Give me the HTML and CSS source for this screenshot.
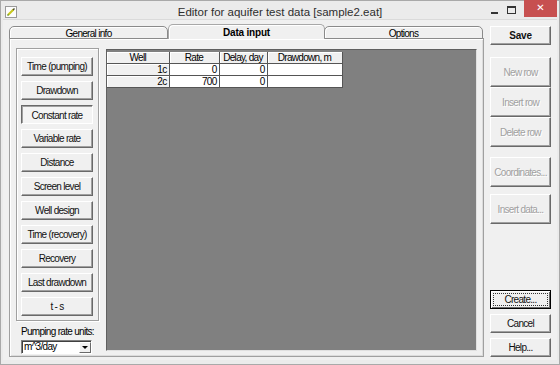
FILE: index.html
```html
<!DOCTYPE html>
<html lang="en">
<head>
    <meta charset="UTF-8">
    <title>Editor for aquifer test data [sample2.eat]</title>
    <link rel="stylesheet" href="styles.css">
</head>
<body>
<div class="window">
    <div class="titlebar">
        <svg class="app-icon" width="12" height="12" viewBox="0 0 12 12">
            <rect x="0.5" y="0.5" width="11" height="11" fill="#fdfdfd" stroke="#9a9a9a"/>
            <path d="M3 9 L8.5 3.5" stroke="#c8c820" stroke-width="2.2"/>
            <path d="M8 4 L9.5 2.5" stroke="#4a4a2a" stroke-width="1.5"/>
            <path d="M2.5 9.5 L3.5 8.5" stroke="#5a8a2a" stroke-width="1.2"/>
        </svg>
        <div class="title">Editor for aquifer test data [sample2.eat]</div>
        <div class="caption">
            <span class="cap-min"></span>
            <span class="cap-max"></span>
            <span class="cap-close">&#x2715;</span>
        </div>
    </div>

    <div class="client">
        <div class="pages">
            <div class="tabs">
                <div class="tab tab-first">General info</div>
                <div class="tab active">Data input</div>
                <div class="tab tab-last">Options</div>
            </div>
            <div class="page">
                <div class="left-col">
                    <div class="group">
                        <button class="btn">Time (pumping)</button>
                        <button class="btn">Drawdown</button>
                        <button class="btn down">Constant rate</button>
                        <button class="btn">Variable rate</button>
                        <button class="btn">Distance</button>
                        <button class="btn">Screen level</button>
                        <button class="btn">Well design</button>
                        <button class="btn">Time (recovery)</button>
                        <button class="btn">Recovery</button>
                        <button class="btn">Last drawdown</button>
                        <button class="btn">t - s</button>
                    </div>
                    <div class="units-label">Pumping rate units:</div>
                    <div class="combo">
                        <span class="combo-text">m^3/day</span>
                        <span class="combo-btn"><span class="arrow"></span></span>
                    </div>
                </div>
                <div class="grid-area">
                    <table class="grid">
                        <colgroup>
                            <col class="c-well">
                            <col class="c-rate">
                            <col class="c-delay">
                            <col class="c-dd">
                        </colgroup>
                        <tr>
                            <th>Well</th>
                            <th>Rate</th>
                            <th>Delay, day</th>
                            <th>Drawdown, m</th>
                        </tr>
                        <tr>
                            <th class="fixed">1c</th>
                            <td>0</td>
                            <td>0</td>
                            <td></td>
                        </tr>
                        <tr>
                            <th class="fixed">2c</th>
                            <td>700</td>
                            <td>0</td>
                            <td></td>
                        </tr>
                    </table>
                </div>
            </div>
        </div>

        <div class="side">
            <button class="btn side-btn save">Save</button>
            <div class="row-btns">
                <button class="btn side-btn tall" disabled>New row</button>
                <button class="btn side-btn tall" disabled>Insert row</button>
                <button class="btn side-btn tall" disabled>Delete row</button>
            </div>
            <button class="btn side-btn tall coords" disabled>Coordinates...</button>
            <button class="btn side-btn tall insert-data" disabled>Insert data...</button>
            <div class="spacer"></div>
            <button class="btn side-btn default"><span class="focus">Create...</span></button>
            <button class="btn side-btn gap">Cancel</button>
            <button class="btn side-btn gap">Help...</button>
        </div>
    </div>
</div>
</body>
</html>
```

FILE: styles.css
```css
body {
    margin: 0;
    background-color: #ffffff;
}
.window {
    width: 560px;
    height: 365px;
    box-sizing: border-box;
    border: 1px solid #a9a9a9;
    background-color: #ebebeb;
    display: flex;
    flex-direction: column;
    font-family: "Liberation Sans", sans-serif;
    font-size: 10px;
    letter-spacing: -0.7px;
    color: #000;
}

/* title bar */
.titlebar {
    height: 18px;
    flex: none;
    display: grid;
    grid-template-columns: 1fr auto 1fr;
    align-items: center;
}
.app-icon {
    margin-left: 4px;
    margin-top: 3px;
}
.title {
    font-size: 11.5px;
    letter-spacing: 0;
    color: #2e2e2e;
    padding-top: 3px;
}
.caption {
    justify-self: end;
    display: flex;
    align-items: flex-start;
    height: 18px;
    margin-right: 2px;
}
.cap-min {
    width: 7px;
    height: 2px;
    background-color: #333;
    margin: 11px 9px 0 0;
}
.cap-max {
    width: 7px;
    height: 5px;
    border: 1px solid #333;
    border-top-width: 2px;
    margin: 5px 8px 0 0;
}
.cap-close {
    width: 33px;
    height: 17px;
    background-color: #c75050;
    color: #fff;
    font-family: "DejaVu Sans", sans-serif;
    font-size: 10px;
    font-weight: bold;
    letter-spacing: 0;
    text-align: center;
    line-height: 16px;
    margin-top: -1px;
}

/* client area */
.client {
    flex: 1;
    min-height: 0;
    margin: 0 2px 4px 2px;
    background-color: #f0f0f0;
    border-top: 1px solid #dadada;
    display: flex;
    gap: 6px;
    padding: 4px 6px 3px 6px;
}
.pages {
    width: 475px;
    display: flex;
    flex-direction: column;
}
.tabs {
    display: flex;
    height: 15px;
    flex: none;
    position: relative;
    z-index: 1;
    margin-bottom: -1px;
}
.tab {
    box-sizing: border-box;
    height: 13px;
    margin-top: 2px;
    border: 1px solid #8a8a8a;
    border-radius: 5px 5px 0 0;
    box-shadow: inset 1px 1px #ffffff;
    text-align: center;
    line-height: 13px;
    background-color: #f0f0f0;
}
.tab-first {
    width: 159px;
}
.tab.active {
    width: 157px;
    height: 15px;
    margin-top: 0;
    border-color: #a8a8a8;
    border-bottom: none;
    font-weight: bold;
    letter-spacing: -0.2px;
    line-height: 15px;
}
.tab-last {
    width: 159px;
    margin-left: -1px;
}
.page {
    flex: 1;
    min-height: 0;
    border: 1px solid #a0a0a0;
    border-top-color: #8a8a8a;
    box-shadow: inset 1px 1px #ffffff, inset -1px -1px #dcdcdc;
    display: flex;
    gap: 7px;
    padding: 9px 6px 2px 6px;
}

/* left column */
.left-col {
    width: 83px;
    display: flex;
    flex-direction: column;
}
.group {
    border: 1px solid #a0a0a0;
    box-shadow: inset 1px 1px #ffffff, 1px 1px #ffffff;
    padding: 8px 5px 4px 4px;
    display: flex;
    flex-direction: column;
    gap: 5px;
}
.btn {
    box-sizing: border-box;
    font-family: inherit;
    font-size: 10px;
    letter-spacing: inherit;
    color: #111;
    background-color: #f0f0f0;
    border: 1px solid;
    border-color: #ffffff #696969 #696969 #ffffff;
    box-shadow: inset -1px -1px #a0a0a0;
    padding: 0;
    margin: 0;
    height: 19px;
    width: 72px;
    flex: none;
    border-radius: 0;
    white-space: nowrap;
}
.btn.down {
    border-color: #696969 #ffffff #ffffff #696969;
    box-shadow: inset 1px 1px #a0a0a0;
    background-color: #f4f4f4;
    padding-top: 1px;
}
.units-label {
    margin-top: 5px;
    padding-left: 5px;
    line-height: 12px;
    white-space: nowrap;
}
.combo {
    margin: 2px 0 0 5px;
    width: 71px;
    height: 14px;
    box-sizing: border-box;
    background-color: #fff;
    border: 1px solid;
    border-color: #808080 #ffffff #ffffff #808080;
    box-shadow: inset 1px 1px #404040;
    display: flex;
    align-items: center;
}
.combo-text {
    flex: 1;
    padding-left: 2px;
    line-height: 12px;
}
.combo-btn {
    width: 12px;
    height: 11px;
    margin-top: 1px;
    box-sizing: border-box;
    background-color: #f0f0f0;
    border: 1px solid;
    border-color: #ffffff #696969 #696969 #ffffff;
    display: flex;
    align-items: center;
    justify-content: center;
}
.arrow {
    width: 0;
    height: 0;
    border-left: 3px solid transparent;
    border-right: 3px solid transparent;
    border-top: 3px solid #000;
}

/* data grid */
.grid-area {
    flex: 1;
    margin: 1px 0 3px 0;
    background-color: #808080;
    border: 1px solid;
    border-color: #5f5f5f #e0e0e0 #e0e0e0 #5f5f5f;
    padding-top: 2px;
}
.grid {
    width: 235px;
    border-collapse: collapse;
    table-layout: fixed;
    border-right: 1px solid #2a2a2a;
    border-bottom: 1px solid #2a2a2a;
}
.c-well { width: 62px; }
.c-rate { width: 50px; }
.c-delay { width: 48px; }
.c-dd { width: 75px; }
.grid th, .grid td {
    height: 11px;
    padding: 0 2px;
    line-height: 11px;
    font-weight: normal;
    white-space: nowrap;
    overflow: hidden;
}
.grid th {
    background-color: #f0f0f0;
    border-right: 1px solid #555;
    border-bottom: 1px solid #555;
    box-shadow: inset 1px 1px #ffffff;
    text-align: center;
}
.grid th.fixed {
    text-align: right;
}
.grid td {
    background-color: #fff;
    border-right: 1px solid #555;
    border-bottom: 1px solid #555;
    text-align: right;
}

/* right column */
.side {
    width: 61px;
    display: flex;
    flex-direction: column;
    padding-top: 2px;
}
.side-btn {
    width: 61px;
}
.save {
    font-weight: bold;
    letter-spacing: -0.2px;
}
.row-btns {
    display: flex;
    flex-direction: column;
    margin-top: 12px;
}
.tall {
    height: 30px;
}
.btn:disabled {
    color: #a0a0a0;
    text-shadow: 1px 1px #ffffff;
}
.coords {
    margin-top: 10px;
}
.insert-data {
    margin-top: 7px;
}
.spacer {
    flex: 1;
}
.default {
    border: 1px solid #000;
    box-shadow: inset 1px 1px #ffffff, inset -1px -1px #696969;
    display: flex;
    align-items: center;
    justify-content: center;
}
.focus {
    display: block;
    width: 53px;
    line-height: 11px;
    border: 1px dotted #333;
}
.gap {
    margin-top: 5px;
}
```
